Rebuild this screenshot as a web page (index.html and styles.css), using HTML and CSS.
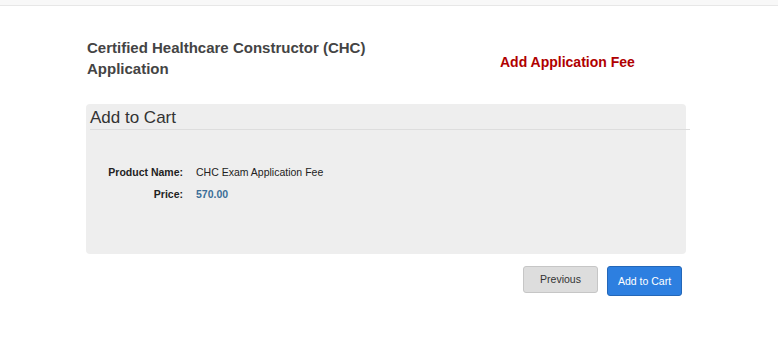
FILE: index.html
```html
<!DOCTYPE html>
<html>
<head>
<meta charset="utf-8">
<link rel="stylesheet" href="styles.css">
</head>
<body>
<div class="topbar"></div>
<div class="page">
  <div class="heading">
    <h1 class="title">Certified Healthcare Constructor (CHC) Application</h1>
    <div class="fee">Add Application Fee</div>
  </div>
  <div class="panel">
    <div class="panel-head">Add to Cart</div>
    <div class="rows">
      <div class="row"><span class="label">Product Name:</span><span class="value">CHC Exam Application Fee</span></div>
      <div class="row"><span class="label">Price:</span><span class="value price">570.00</span></div>
    </div>
  </div>
  <div class="actions">
    <button class="btn btn-default">Previous</button>
    <button class="btn btn-primary">Add to Cart</button>
  </div>
</div>
</body>
</html>
```
FILE: styles.css
```css
html, body {
  margin: 0;
  padding: 0;
  background: #fff;
  font-family: "Liberation Sans", Arial, sans-serif;
  color: #333;
}
.topbar {
  height: 5px;
  background: #f8f8f8;
  border-bottom: 1px solid #e7e7e7;
}
.page {
  width: 600px;
  margin-left: 86px;
}
.heading {
  display: flex;
  align-items: flex-start;
  padding-top: 31px;
}
.title {
  margin: 0 0 0 1px;
  width: 300px;
  font-size: 15px;
  line-height: 21px;
  font-weight: bold;
  color: #444;
}
.fee {
  margin-left: 113px;
  margin-top: 15px;
  font-size: 14px;
  line-height: 20px;
  font-weight: bold;
  color: #b00000;
}
.panel {
  margin-top: 25px;
  height: 150px;
  background: #eeeeee;
  border-radius: 4px;
  box-sizing: border-box;
}
.panel-head {
  margin-left: 4px;
  width: 600px;
  font-size: 17px;
  line-height: 23px;
  padding-top: 2px;
  color: #333;
  border-bottom: 1px solid #dddddd;
}
.rows {
  padding-top: 36px;
  display: flex;
  flex-direction: column;
  gap: 9px;
}
.row {
  display: flex;
  font-size: 10.5px;
  line-height: 13px;
}
.label {
  width: 97px;
  text-align: right;
  font-weight: bold;
  color: #222;
}
.value {
  margin-left: 13px;
  color: #222;
}
.price {
  font-weight: bold;
  color: #3b6e98;
}
.actions {
  display: flex;
  justify-content: flex-end;
  align-items: flex-start;
  gap: 9px;
  margin-top: 12px;
  margin-right: 4px;
}
.btn {
  font-family: "Liberation Sans", Arial, sans-serif;
  font-size: 10.5px;
  border-radius: 3px;
  padding: 0;
  box-sizing: border-box;
  cursor: pointer;
}
.btn-default {
  width: 75px;
  height: 27px;
  background: #dddddd;
  border: 1px solid #c6c6c6;
  color: #333;
  padding-bottom: 2px;
}
.btn-primary {
  width: 75px;
  height: 30px;
  background: #2d7fe0;
  border: 1px solid #2467b8;
  color: #fff;
}
```
